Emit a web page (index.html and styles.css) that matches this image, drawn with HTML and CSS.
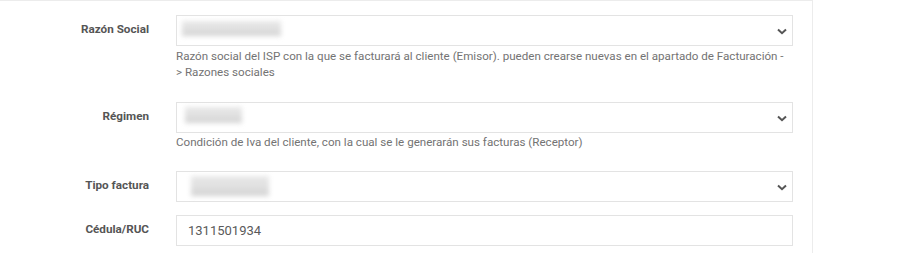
FILE: index.html
```html
<!DOCTYPE html>
<html lang="es">

<head>
    <meta charset="UTF-8">
    <meta name="viewport" content="width=device-width, initial-scale=1.0">
    <title>Facturación</title>
    <link rel="stylesheet" href="styles.css">
</head>

<body>
    <div class="panel">
        <div class="form-group">
            <label>Razón Social</label>
            <div>
                <div class="select">
                    <span class="blur blur-razon"></span>
                    <svg class="caret" width="10" height="7" viewBox="0 0 10 7"><path d="M1 1.5 L5 5.2 L9 1.5" fill="none" stroke="#555" stroke-width="2"/></svg>
                </div>
                <p class="help">Razón social del ISP con la que se facturará al cliente (Emisor). pueden crearse nuevas en el apartado de Facturación -<br>&gt; Razones sociales</p>
            </div>
        </div>

        <div class="form-group">
            <label>Régimen</label>
            <div>
                <div class="select">
                    <span class="blur blur-regimen"></span>
                    <svg class="caret" width="10" height="7" viewBox="0 0 10 7"><path d="M1 1.5 L5 5.2 L9 1.5" fill="none" stroke="#555" stroke-width="2"/></svg>
                </div>
                <p class="help help-short">Condición de Iva del cliente, con la cual se le generarán sus facturas (Receptor)</p>
            </div>
        </div>

        <div class="form-group form-group-tight">
            <label>Tipo factura</label>
            <div>
                <div class="select">
                    <span class="blur blur-tipo"></span>
                    <svg class="caret" width="10" height="7" viewBox="0 0 10 7"><path d="M1 1.5 L5 5.2 L9 1.5" fill="none" stroke="#555" stroke-width="2"/></svg>
                </div>
            </div>
        </div>

        <div class="form-group">
            <label>Cédula/RUC</label>
            <div>
                <div class="input">1311501934</div>
            </div>
        </div>
    </div>
</body>

</html>
```

FILE: styles.css
```css
body {
    margin: 0;
    background-color: white;
    font-family: Roboto, "Liberation Sans", sans-serif;
}

.panel {
    width: 813px;
    height: 253px;
    box-sizing: border-box;
    border-top: 1px solid #ececec;
    border-right: 1px solid #ececec;
    padding-top: 14px;
}

.form-group {
    display: grid;
    grid-template-columns: 149px 617px;
    column-gap: 27px;
    margin-bottom: 14px;
}

.form-group-tight {
    margin-bottom: 13px;
}

.form-group label {
    text-align: right;
    font-size: 11.7px;
    font-weight: bold;
    color: #555;
    line-height: 29px;
}

.select,
.input {
    box-sizing: border-box;
    width: 617px;
    height: 31px;
    border: 1px solid #e3e3e3;
    background-color: white;
}

.select {
    position: relative;
}

.input {
    padding-left: 11px;
    font-size: 13px;
    line-height: 29px;
    color: #5a5a5a;
}

.caret {
    position: absolute;
    right: 5px;
    top: 12px;
}

.blur {
    position: absolute;
    background: linear-gradient(#e8e8e8, #e0e0e0 55%, #d2d2d2);
    filter: blur(2.5px);
}

.blur-razon {
    left: 5px;
    top: 5px;
    width: 99px;
    height: 15px;
}

.blur-regimen {
    left: 8px;
    top: 4px;
    width: 57px;
    height: 16px;
}

.blur-tipo {
    left: 14px;
    top: 4px;
    width: 78px;
    height: 20px;
}

.help {
    margin: 2px 0 8px 0;
    font-size: 11.6px;
    line-height: 16px;
    color: #737373;
}

.help-short {
    margin: 1px 0 7px 0;
}
```
